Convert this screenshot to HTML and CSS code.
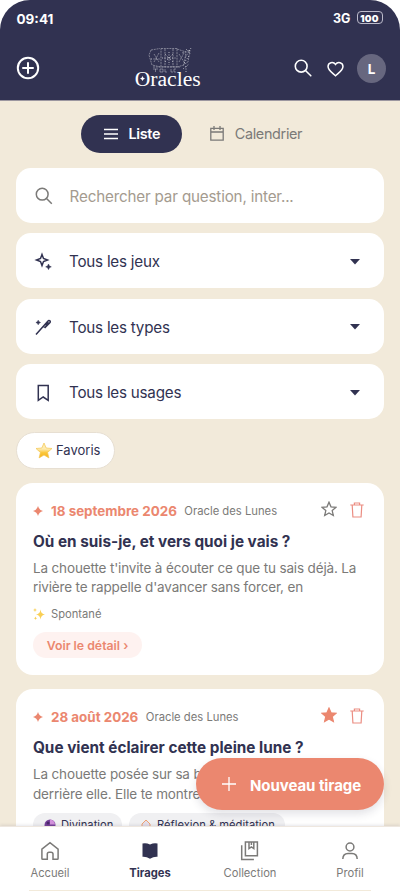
FILE: index.html
```html
<!DOCTYPE html>
<html lang="fr">
<head>
<meta charset="utf-8">
<title>Oracles – Tirages</title>
<link rel="stylesheet" href="styles.css">
</head>
<body>
<svg class="defs" width="0" height="0" aria-hidden="true">
  <symbol id="search" viewBox="0 0 18 18"><circle cx="7.2" cy="7.2" r="5.9"/><path d="M11.5 11.5l5.3 5.3"/></symbol>
  <symbol id="spark" viewBox="0 0 10 10"><path d="M5 0Q6 4 10 5Q6 6 5 10Q4 6 0 5Q4 4 5 0Z"/></symbol>
  <symbol id="star" viewBox="0 0 16 16"><path d="M8 1.2l2 4.6 5 .5-3.8 3.3 1.1 4.9L8 11.9l-4.3 2.6 1.1-4.9L1 6.3l5-.5z"/></symbol>
  <symbol id="trash" viewBox="0 0 14 16"><path d="M.3 3h13.4M4.4 3V1h5.2v2M2.2 3l.7 12h8.2l.7-12"/></symbol>
  <symbol id="caret" viewBox="0 0 10 6"><path d="M0 0h10L5 5.6z"/></symbol>
</svg>
<div class="app">
  <header class="header">
    <div class="status">
      <span class="time">09:41</span>
      <span class="signal">3G <b class="battery">100</b></span>
    </div>
    <div class="toolbar">
      <svg class="line add" viewBox="0 0 24 24"><circle cx="12" cy="12" r="10.2"/><path d="M12 7v10M7 12h10"/></svg>
      <div class="logo">
        <svg class="cards" viewBox="0 0 50 29" stroke="#fff">
          <g stroke-width=".7" opacity=".55" stroke-dasharray="2 .8">
            <path d="M5 3l9-1.5M5 3L3 8l3 10 9 2M15 1.500h16v18.300H15zM19 2v18M27 2v18M31 2l9 3-2 13-7 2M36 6l8-3-2 12-5 3"/>
            <path d="M7 20h27M8 7l5 8M13 6l-5 9M33 7l5 8M38 6l-5 9"/>
          </g>
          <g stroke-width=".9" opacity=".7" stroke-dasharray="1 1.5">
            <path d="M23 5v13M16 11h14M19 7l8 8M27 7l-8 8M5 12h9M40 2l5 5M45 1l-6 10M43 9l-5 7M37 22l6-5M40 19v6"/>
          </g>
          <path d="M7 22h5M9.500 22v3M14 22v3h3v-3zM19 22v3h2M25 22v3h2M30 22h-2v3h2" stroke-width=".7" opacity=".5"/>
        </svg>
        <span class="wordmark">Oracles</span>
        <svg class="twinkle"><use href="#spark"/></svg>
      </div>
      <div class="actions">
        <svg class="line find"><use href="#search"/></svg>
        <svg class="line heart" viewBox="0 0 18 16"><path d="M9 15.200C6 12.300 1.100 9.400 1.100 5.300C1.100 1.100 6.500-.5 9 3.100C11.500-.5 16.900 1.100 16.900 5.300C16.900 9.400 12 12.300 9 15.200Z"/></svg>
        <span class="avatar">L</span>
      </div>
    </div>
  </header>

  <main class="content">
    <div class="tabs">
      <span class="tab active"><svg class="menu-icon" viewBox="0 0 14 12"><path d="M0 1.500h14M0 6h14M0 10.500h14"/></svg>Liste</span>
      <span class="tab"><svg class="cal-icon" viewBox="0 0 14 15"><path d="M.8 2.300h12.400v11.900H.8zM.8 6h12.400M4 0v4M10 0v4"/></svg>Calendrier</span>
    </div>
    <div class="filters">
      <div class="field search"><svg class="ico"><use href="#search"/></svg><span>Rechercher par question, inter...</span></div>
      <div class="field"><svg class="ico" viewBox="0 0 18 18"><path d="M7 1.500L8.500 5.500L12.500 7L8.500 8.500L7 12.500L5.500 8.500L1.500 7L5.500 5.500Z"/><path class="solid" d="M13.500 11l.9 1.900 1.900.9-1.900.9-.9 1.900-.9-1.900-1.900-.9 1.900-.9z"/></svg><span>Tous les jeux</span><svg class="caret"><use href="#caret"/></svg></div>
      <div class="field"><svg class="ico" viewBox="0 0 18 18"><path d="M1 16.500L12.800 3.200Q14 2 14.900 2.900Q15.800 3.800 14.600 5L10.100 9.400L8.400 8M10.500 7.300l3-3"/><path class="solid" d="M3.200 2.200l.8 1.500 1.500.8-1.500.8-.8 1.500-.8-1.500-1.500-.8 1.500-.8z"/></svg><span>Tous les types</span><svg class="caret"><use href="#caret"/></svg></div>
      <div class="field"><svg class="ico" viewBox="0 0 18 18"><path d="M3.300 1.500h9.900v14.800L8.200 13l-4.900 3.300z"/></svg><span>Tous les usages</span><svg class="caret"><use href="#caret"/></svg></div>
    </div>
    <div class="favoris">
      <svg class="gold" viewBox="0 0 18 17"><defs><linearGradient id="g" x2="0" y2="1"><stop offset=".4" stop-color="#fdebb0"/><stop offset=".65" stop-color="#fbc638"/><stop offset="1" stop-color="#f5b21f"/></linearGradient></defs><path d="M9 1l2.200 5 5.800.500-4.400 3.900 1.300 5.500L9 13l-4.900 2.900 1.300-5.500L1 6.500 6.800 6z" fill="url(#g)" stroke="#f3c650" stroke-width=".7" stroke-linejoin="round"/></svg>
      <span>Favoris</span>
    </div>

    <article class="card first">
      <div class="meta">
        <svg class="bullet"><use href="#spark"/></svg>
        <time>18 septembre 2026</time><span class="deck">Oracle des Lunes</span>
        <svg class="star"><use href="#star"/></svg><svg class="trash"><use href="#trash"/></svg>
      </div>
      <h2>Où en suis-je, et vers quoi je vais ?</h2>
      <p>La chouette t'invite à écouter ce que tu sais déjà. La<br>rivière te rappelle d'avancer sans forcer, en</p>
      <div class="kind"><svg viewBox="0 0 12 12"><path d="M7.500 1.500Q8 6 12 6.500Q8 7 7.500 11.500Q7 7 3 6.500Q7 6 7.500 1.500ZM2 0Q2.200 1.800 4 2Q2.200 2.200 2 4Q1.800 2.200 0 2Q1.800 1.800 2 0ZM2.500 8.500Q2.700 10 4.200 10.200Q2.700 10.400 2.500 12Q2.300 10.400 .8 10.200Q2.300 10 2.500 8.500Z"/></svg>Spontané</div>
      <span class="detail">Voir le détail ›</span>
    </article>

    <article class="card second">
      <div class="meta">
        <svg class="bullet"><use href="#spark"/></svg>
        <time>28 août 2026</time><span class="deck">Oracle des Lunes</span>
        <svg class="star full"><use href="#star"/></svg><svg class="trash"><use href="#trash"/></svg>
      </div>
      <h2>Que vient éclairer cette pleine lune ?</h2>
      <p>La chouette posée sur sa branche,<br>derrière elle. Elle te montre</p>
      <div class="tags">
        <span class="tag"><svg viewBox="0 0 12 12"><circle cx="6" cy="6" r="5.500" fill="#78429a"/><path d="M6 .5a5.500 5.500 0 0 1 5 5H6z" fill="#d391dc"/><circle cx="4" cy="4" r="1.500" fill="#4b286c"/></svg>Divination</span>
        <span class="tag wide"><svg viewBox="0 0 12 12"><path d="M2 12V5L6 1l4 4v7" fill="#e4deea" stroke="#efa070"/></svg>Réflexion &amp; méditation</span>
      </div>
    </article>
  </main>

  <div class="fab"><svg viewBox="0 0 14 14"><path d="M7 0v14M0 7h14"/></svg>Nouveau tirage</div>

  <nav class="nav">
    <span class="item"><svg viewBox="0 0 20 20"><path d="M1.900 8.200L10 1.700l8.100 6.500v9.200Q18.100 18.200 17.300 18.200H13v-5.100Q13 11.300 11 11.300H9.100Q7.300 11.300 7.300 13.100v5.100H2.700Q1.900 18.200 1.900 17.400Z"/></svg>Accueil</span>
    <span class="item current"><svg viewBox="0 0 20 20"><path d="M2.500 2.500Q6 1.500 10 3.500Q14 1.500 17.500 2.500V15.800Q13.500 15.500 10 17.800Q6.500 15.500 2.500 15.800Z"/></svg>Tirages</span>
    <span class="item"><svg viewBox="0 0 20 20"><path d="M5.400 1.100h12v13.700h-12zM1.700 4.300v14.300h12.200M9 1.100v6.500l2.400-1.700 2.400 1.700V1.100M11.400 1v3"/></svg>Collection</span>
    <span class="item"><svg viewBox="0 0 20 20"><circle cx="10" cy="6" r="3.900"/><path d="M2.800 18Q3 12.600 8 12.600h4Q17 12.600 17.200 18"/></svg>Profil</span>
  </nav>
</div>
</body>
</html>
```

FILE: styles.css
```css
* { box-sizing: border-box; }
body { margin: 0; background: #fff; font-family: Inter, "Liberation Sans", sans-serif; color: #313251; }
svg { display: block; flex: none; overflow: visible; fill: none; stroke-linecap: butt; }
.defs { position: absolute; }
.app { position: relative; display: flex; flex-direction: column; width: 400px; height: 891px; overflow: hidden; background: #f2eada; }
.app::before { content: ""; position: absolute; inset: 0 0 auto; height: 30px; background: #fff; }

.header { position: relative; flex: none; height: 101px; border-radius: 30px 30px 0 0; background: #313251; border-bottom: 1px solid #9c97a0; color: #fff; }
.status { display: flex; justify-content: space-between; align-items: center; height: 37px; padding: 0 17.500px 0 16.500px; font-weight: 700; font-size: 13.500px; }
.time { padding-top: 1px; }
.signal { display: flex; align-items: center; gap: 6px; font-size: 12.500px; }
.battery { width: 26px; height: 13px; margin-top: -2px; border: 1px solid #bcbbcb; border-radius: 4px; font-size: 9.500px; line-height: 13px; text-align: center; letter-spacing: .3px; }
.toolbar { display: flex; justify-content: space-between; align-items: center; height: 62px; padding: 0 14px 0 16px; }
.line { stroke: #fff; stroke-width: 1.600; stroke-linecap: round; }
.add { width: 24px; height: 24px; stroke-width: 2; }
.logo { position: relative; width: 68px; height: 42px; margin-left: 4px; }
.cards { width: 50px; height: 29px; margin-left: 11px; }
.wordmark { position: absolute; left: 0; top: 20px; font: 21.600px/24px "Liberation Serif", serif; }
.twinkle { position: absolute; left: 5px; top: 29px; width: 5px; height: 5px; fill: #fff; }
.twinkle use { transform: scale(1); }
.actions { display: flex; align-items: center; }
.find { width: 18px; height: 18px; margin: 0 15px 0 0; }
.heart { width: 17px; height: 16px; margin: 2px 13.500px 0 0; }
.avatar { width: 29px; height: 29px; border-radius: 50%; background: #67677f; font-size: 13.500px; font-weight: 700; line-height: 31px; text-align: center; }

.content { flex: 1; min-height: 0; overflow: hidden; padding: 13.700px 16.400px 0; }
.tabs { display: flex; gap: 10px; height: 38.300px; padding-left: 64.600px; }
.tab { display: flex; align-items: center; gap: 10.500px; padding: 0 18.300px; border-radius: 19.500px; font-size: 14.400px; letter-spacing: -.33px; color: #7b7a78; }
.tab.active { width: 101px; padding: 0 0 0 23px; color: #fff; background: #313251; font-weight: 600; }
.menu-icon { width: 14px; height: 12px; stroke: #fff; stroke-width: 1.300; }
.cal-icon { width: 14px; height: 15px; stroke: #7b7a78; stroke-width: 1.300; }
.filters { display: grid; gap: 10.500px; margin-top: 14.700px; }
.field { display: flex; align-items: center; height: 55px; padding: 2px 24px 0 19px; border-radius: 15px; background: #fff; font-size: 15.200px; letter-spacing: -.22px; }
.ico { width: 18px; height: 18px; margin-right: 15.600px; stroke: #313251; stroke-width: 1.500; }
.solid { fill: #313251; stroke-width: .5; }
.caret { width: 10px; height: 6px; margin-left: auto; fill: #313251; }
.search { color: #a49b8f; letter-spacing: -.17px; }
.search .ico { margin-right: 16.200px; stroke: #7b7a78; }
.favoris { display: flex; align-items: center; gap: 3px; width: 99px; height: 37px; margin-top: 12.500px; padding-left: 17.600px; border: 1px solid #e7dfd2; border-radius: 19px; background: #fff; font-size: 13px; }
.gold { width: 18px; height: 17px; }

.card { border-radius: 17px; background: #fff; padding: 18px 16.600px 0; }
.first { height: 192px; margin-top: 14.300px; }
.second { height: 190px; margin-top: 14px; }
.meta { display: flex; align-items: center; height: 20px; color: #eb876f; }
.meta time { margin: 0 7.500px 0 8px; font-size: 13.400px; font-weight: 700; }
.bullet { width: 10px; height: 10px; fill: #eb876f; }
.deck { font-size: 11.250px; color: #7b7a78; }
.star { width: 16px; height: 16px; margin: -3px 12.500px 0 auto; stroke: #7b7a78; stroke-width: 1.300; }
.star.full { fill: #eb876f; stroke: #eb876f; }
.trash { width: 14px; height: 16px; margin: -2px 3.400px 0 0; stroke: #eb8d82; stroke-width: 1.200; }
h2 { margin: 10px 0 0; font-size: 15.300px; line-height: 22px; font-weight: 700; white-space: nowrap; }
p { margin: 6px 0 0; font-size: 13.500px; line-height: 19.300px; letter-spacing: -.15px; color: #7b7a78; white-space: nowrap; }
.second p { margin-top: 5px; line-height: 20px; }
.kind { display: flex; align-items: center; gap: 6px; height: 16px; margin-top: 8.400px; font-size: 11.200px; color: #7b7a78; }
.kind svg { width: 12px; height: 12px; fill: #f9cf55; }
.detail { display: block; width: 109px; height: 26px; margin-top: 10px; border-radius: 13px; background: #fef2f0; color: #eb876f; font-size: 12.300px; font-weight: 600; line-height: 27px; text-align: center; }
.tags { display: flex; gap: 7px; margin-top: 9px; }
.tag { display: flex; align-items: center; gap: 5px; width: 89px; height: 24px; padding-left: 11px; border-radius: 12px; background: #f0f0f2; font-size: 11.200px; white-space: nowrap; }
.tag.wide { width: 156px; }
.tag svg { width: 12px; height: 12px; }

.fab { position: absolute; left: 196px; top: 758px; display: flex; align-items: center; gap: 14px; width: 188px; height: 52px; padding: 2px 0 0 26px; border-radius: 26px; background: #eb876f; color: #fff; font-size: 15px; letter-spacing: -.06px; font-weight: 700; box-shadow: 0 4px 9px rgba(49, 50, 81, .14); }
.fab svg { width: 14px; height: 14px; margin-top: -3px; stroke: #fff; stroke-width: 1.300; }

.nav { position: relative; flex: none; display: grid; grid-template-columns: repeat(4, 1fr); height: 65px; padding-top: 14px; background: #fff; border-top: 1px solid #eee7df; box-shadow: 0 -1px 3px rgba(49, 50, 81, .12); }
.nav::after { content: ""; position: absolute; left: 29px; right: 29px; bottom: 0; height: 1px; background: #f2eada; }
.item { display: flex; flex-direction: column; align-items: center; gap: 5px; font-size: 11.200px; line-height: 14px; color: #7b7a78; }
.item svg { width: 20px; height: 20px; stroke: #7b7a78; stroke-width: 1.500; }
.current { color: #313251; font-weight: 700; }
.current svg { fill: #313251; stroke: none; }
```
